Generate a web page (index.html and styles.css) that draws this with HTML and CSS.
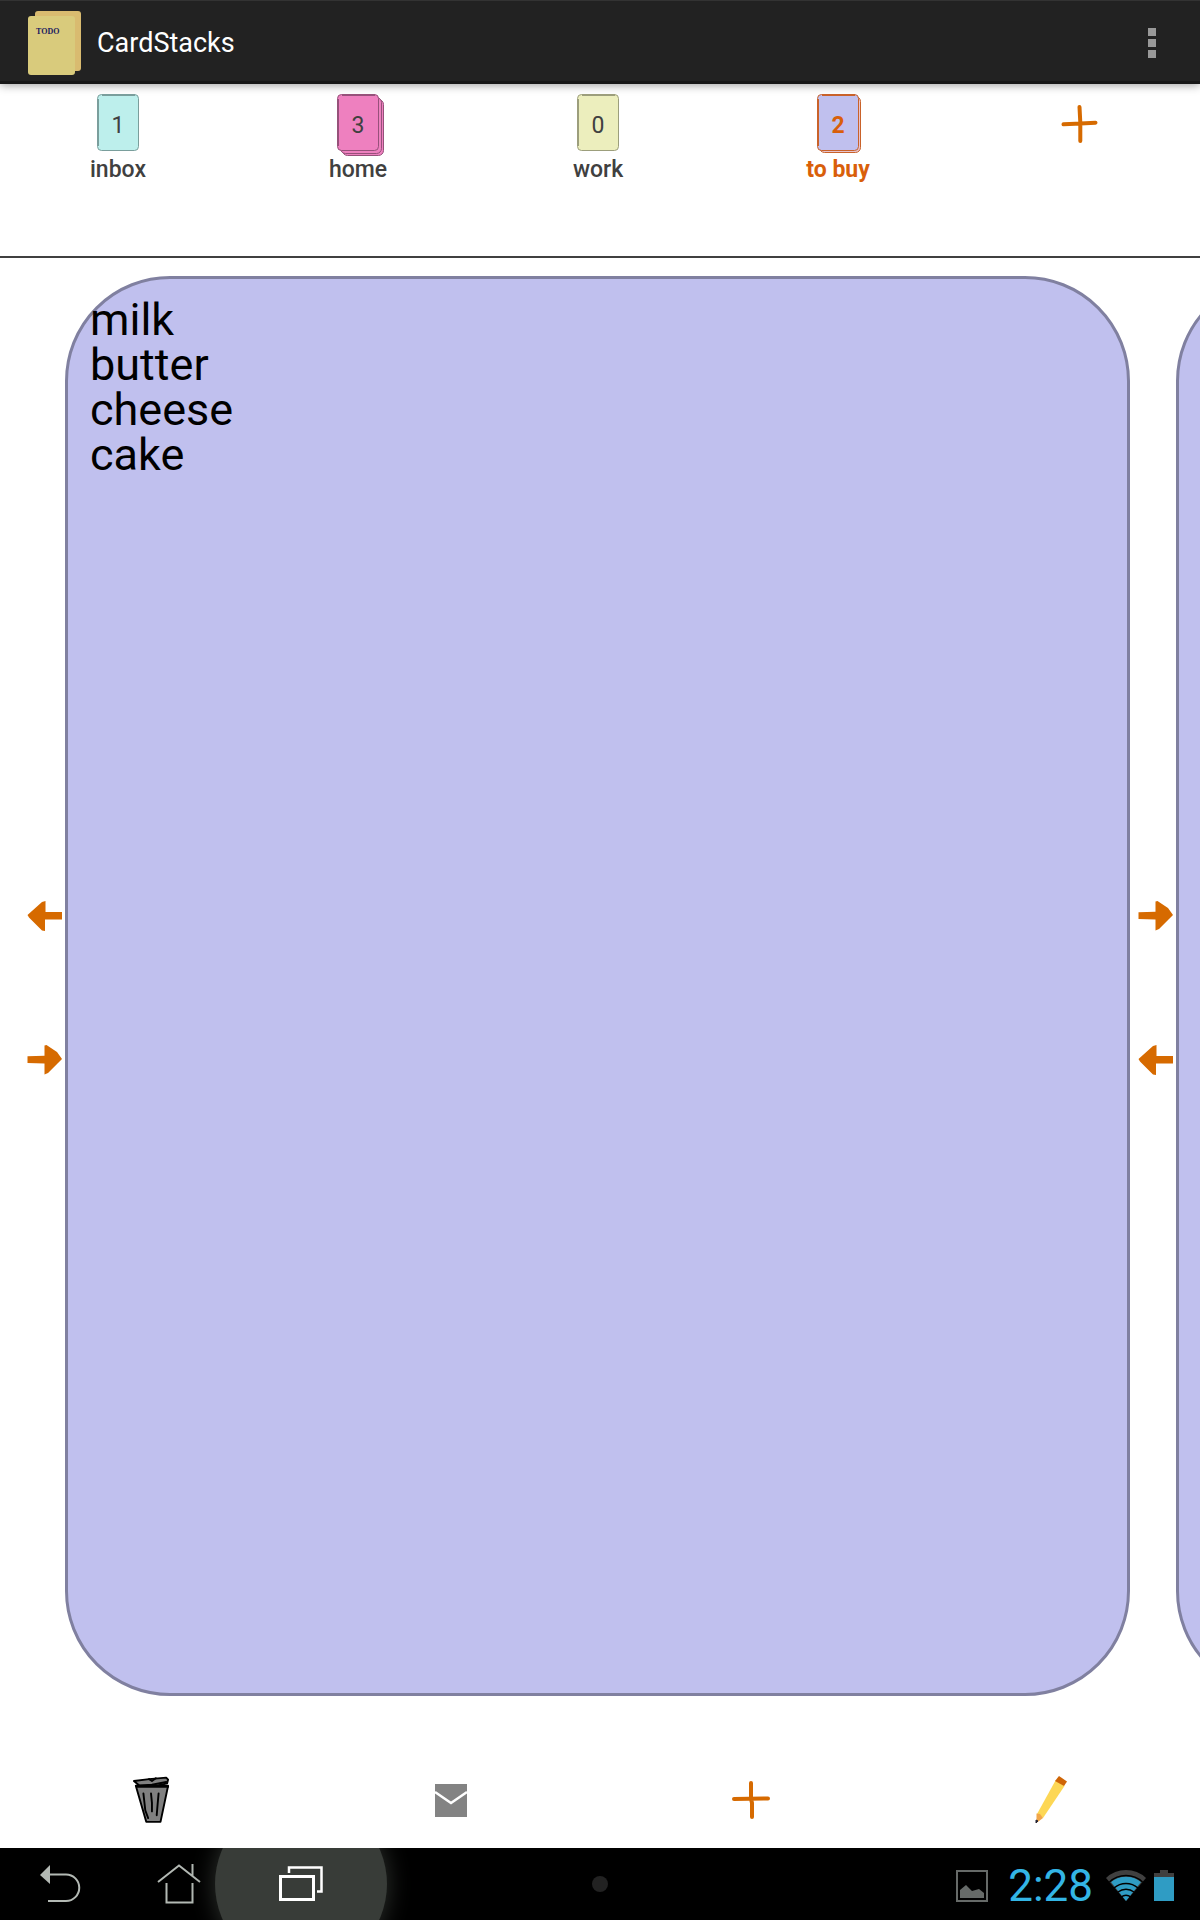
FILE: index.html
```html
<!DOCTYPE html>
<html lang="en">
<head>
<meta charset="utf-8">
<meta name="viewport" content="width=device-width, initial-scale=1">
<title>CardStacks</title>
<link rel="stylesheet" href="styles.css">
</head>
<body>
<header class="app-bar">
  <div class="logo" aria-hidden="true">
    <svg class="logo-art" width="54" height="64" viewBox="0 0 54 64">
      <rect x="7" y="0" width="46" height="60" rx="3" fill="#d9bb70"/>
      <rect x="0" y="5" width="47" height="59" rx="3" fill="#d9cb7c"/>
    </svg>
    <span class="logo-text">TODO</span>
  </div>
  <h1 class="title">CardStacks</h1>
  <button class="overflow" aria-label="More options">
    <svg width="8" height="30" viewBox="0 0 8 30" fill="#999"><path d="M0 0h8v8H0zM0 11h8v8H0zM0 22h8v8H0z"/></svg>
  </button>
</header>

<nav class="stacks" aria-label="Stacks">
  <button class="stack">
    <span class="pile">
      <svg class="pile-art" width="48" height="64" viewBox="0 0 48 64" fill="#bdefec" stroke="#7a9e9c">
        <rect x=".5" y=".5" width="41" height="56" rx="4"/><path d="M1 5v47M5 1h33" stroke-width="2"/>
      </svg>
      <span class="count">1</span>
    </span>
    <span class="name">inbox</span>
  </button>
  <button class="stack">
    <span class="pile">
      <svg class="pile-art" width="48" height="64" viewBox="0 0 48 64" fill="#ee80bf" stroke="#96517a">
        <rect x="5.500" y="5.500" width="41" height="56" rx="5"/><rect x="3.500" y="3.500" width="41" height="56" rx="5"/><rect x=".5" y=".5" width="41" height="56" rx="4"/><path d="M1 5v47M5 1h33" stroke-width="2"/>
      </svg>
      <span class="count">3</span>
    </span>
    <span class="name">home</span>
  </button>
  <button class="stack">
    <span class="pile">
      <svg class="pile-art" width="48" height="64" viewBox="0 0 48 64" fill="#eceebd" stroke="#9c9e7c">
        <rect x=".5" y=".5" width="41" height="56" rx="4"/><path d="M1 5v47M5 1h33" stroke-width="2"/>
      </svg>
      <span class="count">0</span>
    </span>
    <span class="name">work</span>
  </button>
  <button class="stack current" aria-current="true">
    <span class="pile">
      <svg class="pile-art" width="48" height="64" viewBox="0 0 48 64" fill="#c0c0ee" stroke="#c9622a">
        <rect x="2.500" y="2.500" width="41" height="56" rx="5" fill="#e6c3cd"/><rect x=".5" y=".5" width="41" height="56" rx="4"/><path d="M1 5v47M5 1h33" stroke-width="2"/>
      </svg>
      <span class="count">2</span>
    </span>
    <span class="name">to buy</span>
  </button>
  <button class="stack-add" aria-label="Add stack">
    <svg width="38" height="40" viewBox="0 0 38 40" fill="none" stroke="#d66a00" stroke-width="4" stroke-linecap="round" stroke-linejoin="round"><path d="M2.500 20.300l12-.6 20-1M18.500 3l.8 15.500v18.500"/></svg>
  </button>
</nav>

<main class="stage">
  <div class="gutter">
    <button class="arrow" aria-label="Previous card">
      <svg width="36" height="32" viewBox="0 0 36 32" fill="#d66a00"><path d="M.5 15 15 2 18.500 1v11h16.500v7.500H18V31l-3-.5L2 17.500z"/></svg>
    </button>
    <button class="arrow" aria-label="Move card to back">
      <svg width="36" height="32" viewBox="0 0 36 32" fill="#d66a00"><path d="M.5 12.300 17.500 11.700V1.500l2-.5L30 8l5 7-14 14-3.500 1.500V19.500L.5 19z"/></svg>
    </button>
  </div>
  <article class="card">
    <ul class="items">
      <li>milk</li>
      <li>butter</li>
      <li>cheese</li>
      <li>cake</li>
    </ul>
  </article>
  <div class="gutter gutter-narrow">
    <button class="arrow" aria-label="Next card">
      <svg width="36" height="32" viewBox="0 0 36 32" fill="#d66a00"><path d="M.5 12.300 17.500 11.700V1.500l2-.5L30 8l5 7-14 14-3.500 1.500V19.500L.5 19z"/></svg>
    </button>
    <button class="arrow" aria-label="Bring card to front">
      <svg width="36" height="32" viewBox="0 0 36 32" fill="#d66a00"><path d="M.5 15 15 2 18.500 1v11h16.500v7.500H18V31l-3-.5L2 17.500z"/></svg>
    </button>
  </div>
  <div class="peek"><div class="card card-next"></div></div>
</main>

<div class="tools" role="toolbar" aria-label="Card actions">
  <button class="tool" aria-label="Delete card">
    <svg width="38" height="50" viewBox="0 0 40 50" stroke="#000" stroke-width="2" stroke-linejoin="round" stroke-linecap="round">
      <path d="M4 10l11 38h15l8-38z" fill="#808080"/>
      <path d="M2 5l16-2 18-1.500 2 2-1 4-11 2.500H8z" fill="#808080"/>
      <path d="M5 10l16-1 15-3M5 11h33M18 3l3 2 4-3" fill="none"/>
      <path d="M12 18l2 18 3 8M20 18l1 10v9M28 18l-1 11-1 12" fill="none"/>
    </svg>
  </button>
  <button class="tool" aria-label="Mail card">
    <svg width="32" height="33" viewBox="0 0 32 33"><path d="M0 0h32v33H0z" fill="#838383"/><path d="M0 8l16 11L32 8" fill="none" stroke="#fff" stroke-width="2.500"/></svg>
  </button>
  <button class="tool" aria-label="Add card">
    <svg width="40" height="40" viewBox="0 0 40 40" fill="none" stroke="#d66a00" stroke-width="4" stroke-linecap="round" stroke-linejoin="round"><path d="M3 19l34-.5M20 3v16l1 4v14"/></svg>
  </button>
  <button class="tool" aria-label="Edit card">
    <svg width="32" height="50" viewBox="0 0 32 50"><path d="M20.500 5.500 29.500 11 8 43 2 39z" fill="#fdd755"/><path d="M24 1l8 5.500-3 4.500-9-5z" fill="#cf6506"/><path d="M1.500 38.500 5 39l3 4-6.500 5z" fill="#f2a649"/><path d="M1 45l2 1-2 2z" fill="#223" stroke="#223"/></svg>
  </button>
</div>

<footer class="system-bar">
  <button class="sys sys-back" aria-label="Back">
    <svg width="42" height="38" viewBox="0 0 42 38"><path d="M1 10 11 0v19z" fill="#b3b9b4"/><path d="M11 9.500h16a13 13 0 0 1 0 26.500H9" fill="none" stroke="#b3b9b4" stroke-width="2"/></svg>
  </button>
  <button class="sys sys-home" aria-label="Home">
    <svg width="44" height="40" viewBox="0 0 44 40" fill="none" stroke="#b3b9b4" stroke-width="2"><path d="M1 18 22 1.500 43 18M35.500 0v12M9.500 19v19.500h26V19"/></svg>
  </button>
  <button class="sys sys-recent" aria-label="Recent apps">
    <svg width="44" height="36" viewBox="0 0 44 36" fill="none" stroke="#fff" stroke-width="3"><path d="M1.500 10.500h33v23h-33z"/><path d="M10 7V1.500h32.500v24H38" stroke-width="2.500"/></svg>
  </button>
  <span class="dot" aria-hidden="true"></span>
  <div class="status">
    <svg width="32" height="32" viewBox="0 0 32 32"><path d="M1 1h30v30H1z" fill="none" stroke="#666a68" stroke-width="2"/><path d="M4 28v-8l6-5 6 6 7-2 5 4v5z" fill="#666a68"/></svg>
    <time class="clock">2:28</time>
    <svg class="wifi" width="40" height="32" viewBox="0 0 40 32" aria-label="Wi-Fi">
      <path d="M0 8a29 29 0 0 1 40 0L20 31z" fill="#404040"/>
      <path d="M5 12a24 24 0 0 1 30 0L20 31z" fill="#2f9cc4"/>
      <path d="M3.500 12a24 24 0 0 1 33 0M8 18a18 18 0 0 1 24 0M12 22a13 13 0 0 1 16 0M15 27a9 9 0 0 1 10 0" fill="none" stroke="#000" stroke-width="1.500"/>
    </svg>
    <svg width="20" height="31" viewBox="0 0 20 31" aria-label="Battery"><path d="M0 3h6V0h8v3h6v5H0z" fill="#404040"/><path d="M0 7h20v24H0z" fill="#2f9cc4"/></svg>
  </div>
</footer>
</body>
</html>
```
FILE: styles.css
```css
* { box-sizing: border-box; }

body {
  margin: 0;
  min-height: 100vh;
  display: flex;
  flex-direction: column;
  background: #fff;
  font-family: Roboto, "Noto Sans", sans-serif;
  color: #404040;
}

button {
  margin: 0;
  padding: 0;
  border: 0;
  background: none;
  font: inherit;
  color: inherit;
  cursor: pointer;
}

svg { display: block; flex: none; }

.app-bar {
  display: flex;
  align-items: center;
  height: 84px;
  padding: 3px 44px 0 28px;
  background: #222;
  border-top: 1px solid #333;
  border-bottom: 3px solid #181818;
  box-shadow: 0 1px 9px rgba(0, 0, 0, 0.4);
}

.logo { display: grid; }
.logo-art, .logo-text { grid-area: 1 / 1; }
.logo-text {
  padding: 15px 0 0 8px;
  font: bold 8px/12px "Liberation Serif", serif;
  color: #1a1a60;
}

.title {
  flex: 1;
  margin: 0 0 0 15px;
  font-size: 27px;
  font-weight: 400;
  color: #fff;
}

.stacks {
  display: grid;
  grid-template-columns: repeat(5, 1fr);
  height: 174px;
  padding-top: 10px;
  border-bottom: 2px solid #404040;
}

.stack {
  display: flex;
  flex-direction: column;
  align-items: center;
  padding-right: 4px;
  font-size: 23px;
  line-height: 28px;
}

.pile {
  display: grid;
  grid-template-columns: 42px;
  width: 42px;
  height: 62px;
}
.pile-art, .count { grid-area: 1 / 1; }
.count { padding-top: 18px; text-align: center; }
.name { font-weight: 500; }
.current { color: #d95f0a; font-weight: 700; }
.current .name { font-weight: 700; }

.stack-add {
  display: flex;
  justify-content: center;
  padding-top: 10px;
}

.stage {
  flex: 1;
  display: flex;
  margin-top: 18px;
  overflow: hidden;
}

.gutter {
  flex: none;
  width: 65px;
  display: flex;
  flex-direction: column;
  justify-content: center;
  align-items: flex-end;
  gap: 112px;
  padding: 4px 2px 0 0;
}
.gutter-narrow { width: 46px; padding-right: 2px; }

.card {
  flex: 1;
  min-height: 400px;
  padding: 18px 22px;
  background: #c0c0ee;
  border: 3px solid #8080a0;
  border-radius: 105px;
}

.items {
  margin: 0;
  padding: 0;
  list-style: none;
  font-size: 45px;
  line-height: 45px;
  color: #000;
}

.peek {
  flex: none;
  display: flex;
  width: 24px;
  overflow: hidden;
}
.card-next { flex: none; width: 1065px; }

.tools {
  display: grid;
  grid-template-columns: repeat(4, 1fr);
  height: 96px;
  margin-top: 56px;
}
.tool {
  display: flex;
  justify-content: center;
  align-items: center;
  padding-left: 2px;
}

.system-bar {
  display: flex;
  align-items: center;
  height: 72px;
  background: #000;
  overflow: hidden;
}
.sys {
  display: flex;
  justify-content: center;
  align-items: center;
  height: 72px;
}
.sys-back { width: 120px; }
.sys-home { width: 95px; padding-left: 22px; }
.sys-recent {
  width: 172px;
  height: 172px;
  border-radius: 50%;
  background: #383c38;
  box-shadow: 0 0 24px #303430;
}
.dot {
  width: 16px;
  height: 16px;
  margin-left: 205px;
  border-radius: 50%;
  background: #222;
}
.status {
  flex: 1;
  display: flex;
  justify-content: flex-end;
  align-items: center;
  padding: 3px 26px 0 0;
}
.clock {
  margin: 0 13px 0 20px;
  font-size: 44px;
  line-height: 52px;
  color: #33b5e5;
}
.wifi { margin-right: 8px; }
```
